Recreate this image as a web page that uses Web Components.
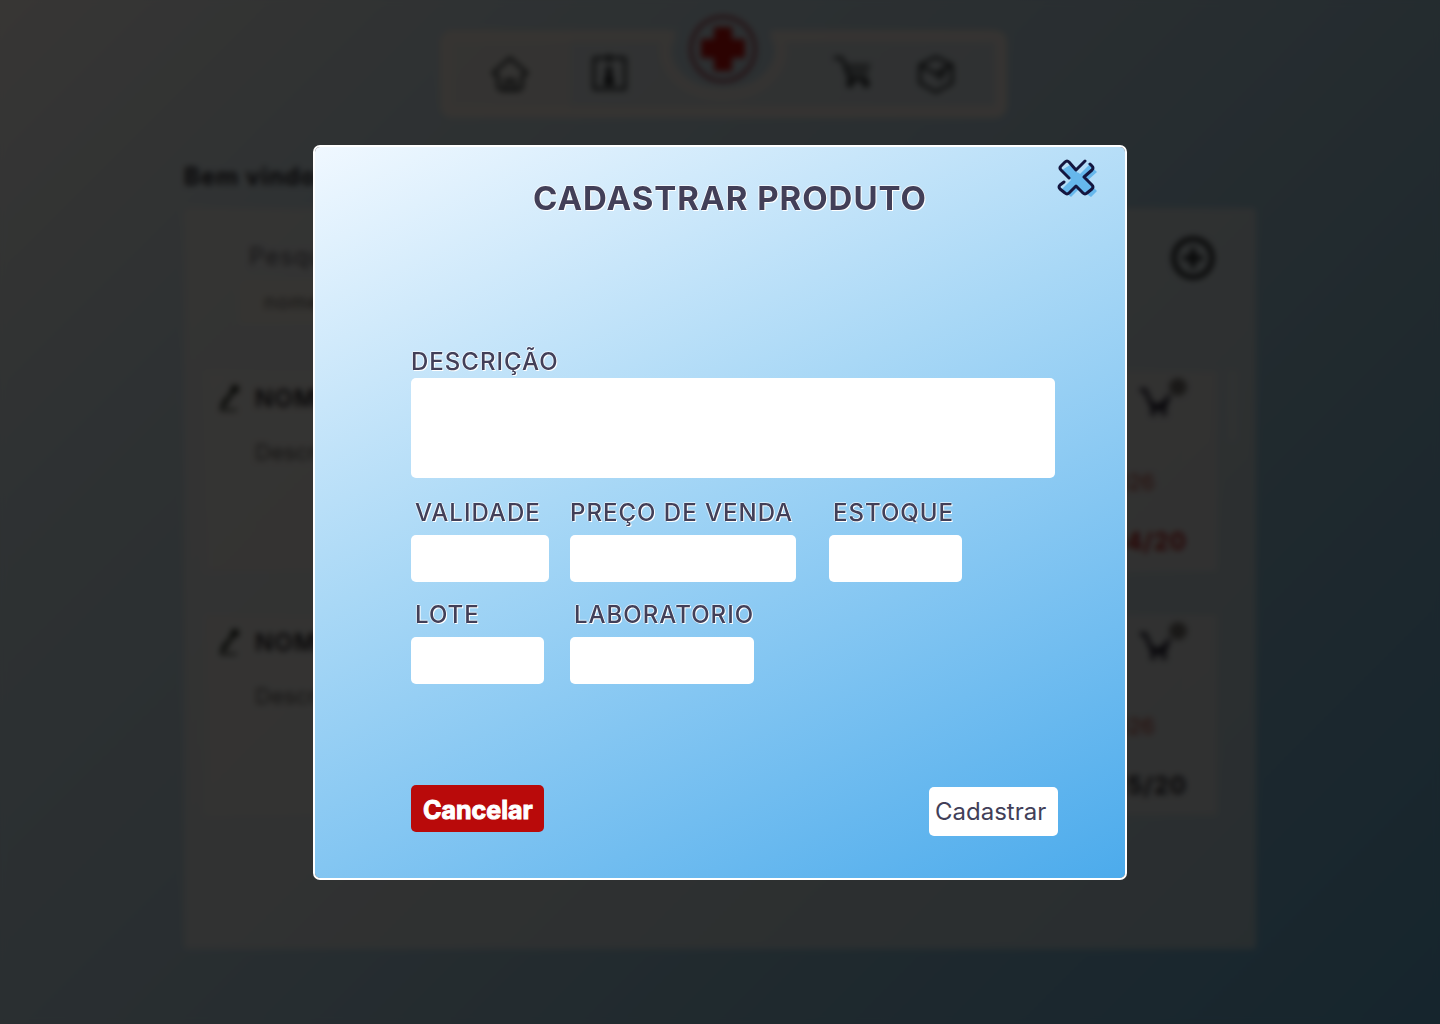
<!DOCTYPE html>
<html lang="pt-BR">
<head>
<meta charset="utf-8">
<title>Cadastrar produto</title>
<style>
  html, body { margin: 0; min-height: 100%; }
  body { font-family: Inter, "Liberation Sans", sans-serif; color: #423f58; }
</style>
</head>
<body>
<pharmacy-app></pharmacy-app>

<template id="t-app">
  <style>
    :host { display: block; position: relative; min-height: 100vh; overflow: hidden;
      background: linear-gradient(135deg, #fffdfa 0%, #d0e6f2 22%, #b9d7e8 45%, #8cc0dc 70%, #5aaad7 100%); }
    .page { max-width: 1072px; margin: 0 auto; padding: 30px 24px 75px; }
    .welcome { margin: 43px 0 15px; font-size: 24px; line-height: 32px; font-weight: 700; letter-spacing: 1px; color: #14141e; }
    .veil { position: absolute; inset: 0; z-index: 1; display: flex; align-items: center; justify-content: center;
      background: rgba(5, 4, 3, .8); backdrop-filter: blur(3px); }
  </style>
  <div class="page">
    <main-nav></main-nav>
    <h2 class="welcome">Bem vindo</h2>
    <product-panel>
      <product-card alert name="NOME" expiry="2026" stock="4/20"></product-card>
      <product-card name="NOME" expiry="2026" stock="5/20"></product-card>
    </product-panel>
  </div>
  <div class="veil"><product-dialog></product-dialog></div>
</template>

<template id="t-nav">
  <style>
    :host { display: flex; justify-content: center; padding-left: 7px; }
    nav { position: relative; width: 567px; height: 88px; }
    .shape { position: absolute; left: 0; top: -20px; width: 567px; height: 108px; }
    ul { position: relative; display: grid; grid-template-columns: 99px 244px 83px 40px; margin: 0; padding: 24px 50px 0; list-style: none; }
    a { display: block; width: 40px; height: 40px; color: #141c22; }
    svg { display: block; fill: none; stroke: currentColor; stroke-width: 3; stroke-linejoin: round; stroke-linecap: round; }
  </style>
  <nav aria-label="Principal">
    <svg class="shape" viewBox="0 0 567 108" stroke="none">
      <path stroke="none" fill="#fff8f6" fill-opacity=".42" d="M12 20H238C226 30 224 42 229 55 236 76 262 86 283 86 304 86 330 76 337 55 342 42 340 30 328 20H555Q567 20 567 32V96Q567 108 555 108H12Q0 108 0 96V32Q0 20 12 20Z"/>
      <path stroke="#fff6ec" stroke-opacity=".75" stroke-width="12" d="M14 26H230C224 36 224 48 232 60 244 78 264 84 283 84 302 84 322 78 334 60 342 48 342 36 336 26H552Q561 26 561 35V93Q561 102 552 102H14Q6 102 6 93V35Q6 26 14 26Z"/>
      <path stroke="none" fill="#fff6ec" fill-opacity=".45" d="M6 26H130V102H6Z"/>
      <circle cx="283" cy="39" r="32" stroke="#a02838" stroke-width="3"/>
      <path stroke="none" fill="#c80000" d="M274 17H292V29H305V48H292V61H274V48H261V29H274Z"/>
    </svg>
    <ul>
      <li><a href="#inicio" aria-label="Início"><svg width="40" height="40" viewBox="0 0 40 40"><path d="M3 19 20 4 37 19 32 22V31Q32 36 27 36H13Q8 36 8 31V22ZM16 36V26H24V36"/></svg></a></li>
      <li><a href="#perfil" aria-label="Perfil"><svg width="40" height="40" viewBox="0 0 40 40"><path d="M5 4H36V35H5ZM20 0V8"/><circle cx="20" cy="16" r="2" fill="currentColor"/><path fill="currentColor" d="M18 21H22L24 30H16Z"/></svg></a></li>
      <li><a href="#carrinho" aria-label="Carrinho"><svg width="40" height="40" viewBox="0 0 40 40"><path d="M2 4H9L17 26H34" /><path fill="currentColor" fill-opacity=".45" stroke="none" d="M12 9H38L33 26H15Z"/><circle cx="17" cy="30" r="2"/><circle cx="33" cy="30" r="2"/></svg></a></li>
      <li><a href="#produtos" aria-label="Produtos"><svg width="40" height="40" viewBox="0 0 40 40"><path stroke-width="3" d="M20 3 36 11V29L20 38 4 29V11ZM4 11 20 20 36 11"/><path fill="currentColor" fill-opacity=".6" stroke="none" d="M20 20 30 10V22L22 28Z"/></svg></a></li>
    </ul>
  </nav>
</template>

<template id="t-panel">
  <style>
    :host { display: block; box-sizing: border-box; min-height: 741px; padding: 32px 19px 0 21px;
      background: linear-gradient(135deg, rgba(255,250,248,.6), rgba(255,246,236,.5)); border-radius: 4px; }
    .search { display: flex; justify-content: space-between; height: 131px; padding: 0 20px 0 35px; }
    label { display: block; padding-left: 9px; margin-bottom: 6px; font-size: 24px; line-height: 34px; letter-spacing: 1px; color: #5a5864; }
    input { box-sizing: border-box; width: 420px; height: 43px; padding: 0 24px; border: 0; background: rgba(255,248,232,.5); font: 20px/24px Inter, sans-serif; letter-spacing: 1px; color: #555260; }
    input::placeholder { color: #555; opacity: 1; }
    button { width: 48px; height: 48px; margin: -6px 0 0; padding: 0; border: 0; background: none; color: #0c1218; }
    .list { display: flex; gap: 11px; }
    .cards { flex: 1; display: flex; flex-direction: column; gap: 44px; }
    .bar { width: 9px; height: 70px; background: rgba(255,255,255,.25); }
  </style>
  <div class="search">
    <div><label for="q">Pesquisar</label><input id="q" type="text" placeholder="nome"></div>
    <button type="button" aria-label="Adicionar produto"><svg width="48" height="48" viewBox="0 0 48 48" fill="none" stroke="currentColor" stroke-width="5"><circle cx="24" cy="24" r="19"/><path stroke-width="5" d="M24 14V34M14 24H34"/></svg></button>
  </div>
  <div class="list"><div class="cards"><slot></slot></div><div class="bar"></div></div>
</template>

<template id="t-card">
  <style>
    :host { display: flex; justify-content: space-between; box-sizing: border-box; height: 200px; padding: 12px 30px 0 12px;
      background: linear-gradient(100deg, rgba(255,248,240,.35), rgba(255,242,238,.45)); color: #14141e; }
    .left { display: flex; gap: 14px; }
    svg { display: block; }
    h3 { margin: 0 0 22px; font-size: 24px; line-height: 32px; font-weight: 600; letter-spacing: 1px; }
    p { margin: 0; font-size: 22px; line-height: 30px; color: #555; }
    .right { display: flex; flex-direction: column; align-items: flex-end; }
    .cart { margin-top: -6px; color: #14142c; }
    .expiry { margin: 48px 32px 0 0; color: #b43c30; }
    .stock { margin-top: 30px; font-size: 24px; line-height: 30px; font-weight: 700; letter-spacing: 1px; }
    :host([alert]) .stock { color: #b40a0a; }
  </style>
  <div class="left">
    <svg width="24" height="32" viewBox="0 0 24 32" fill="none" stroke="#0c170f" stroke-width="4" stroke-linecap="round"><path d="M18 5 6 23"/><path stroke-width="2" d="M4 27H19M4 26 7 17"/><circle cx="18" cy="6" r="2"/></svg>
    <div><h3></h3><p>Descrição</p></div>
  </div>
  <div class="right">
    <svg class="cart" width="50" height="42" viewBox="0 0 50 42" fill="none" stroke="currentColor" stroke-width="4"><path d="M3 13H8L16 31H27L32 18M12 24 20 30 29 24"/><circle cx="16" cy="36" r="1"/><circle cx="27" cy="36" r="1"/><circle cx="41" cy="10" r="9" fill="#6c6c6c" stroke="none"/></svg>
    <p class="expiry"></p>
    <div class="stock"></div>
  </div>
</template>

<template id="t-dialog">
  <style>
    :host { display: block; box-sizing: border-box; position: relative; width: 814px; max-width: 100%; padding: 31px 67px 42px 96px;
      border: 2px solid #fff; border-radius: 7px; font-family: Inter, "Liberation Sans", sans-serif;
      background: linear-gradient(155deg, #f0f8ff 0%, #a9d8f6 42%, #4cabec 100%) padding-box; }
    h1 { margin: 0 0 127px -9px; font-size: 33px; line-height: 40px; font-weight: 700; letter-spacing: 1px; text-align: center; color: #423f58;
      text-shadow: 1px 1px 0 #fff, -1px 0 0 #ffffffb3, 0 -1px 0 #ffffffb3; }
    .close { position: absolute; top: 11px; right: 26px; width: 42px; height: 40px; padding: 0; border: 0; background: none; }
    .row { display: grid; grid-template-columns: 138px 238px 133px; column-gap: 21px; align-items: start; }
    form { display: flex; flex-direction: column; }
    .first { margin: 18px 0 16px; }
    .actions { display: flex; justify-content: space-between; align-items: flex-start; margin-top: 101px; }
    button { cursor: pointer; }
    .cancel, .save { box-sizing: border-box; border: 0; border-radius: 5px; font: 24px/30px Inter, "Liberation Sans", sans-serif; text-align: left; }
    .cancel { width: 133px; height: 47px; padding: 4px 0 0 12px; background: #b90a0a; color: #fff; font-size: 25px; font-weight: 700; -webkit-text-stroke: 1px #fff; }
    .save { width: 129px; height: 49px; margin-top: 2px; padding: 2px 0 0 6px; background: #fff; color: #423f58; }
  </style>
  <h1>CADASTRAR PRODUTO</h1>
  <form>
    <form-field label="DESCRIÇÃO" multiline></form-field>
    <div class="row first">
      <form-field label="VALIDADE" width="138" inset></form-field>
      <form-field label="PREÇO DE VENDA" width="226"></form-field>
      <form-field label="ESTOQUE" width="133" inset></form-field>
    </div>
    <div class="row">
      <form-field label="LOTE" width="133" inset></form-field>
      <form-field label="LABORATORIO" width="184" inset></form-field>
    </div>
    <div class="actions">
      <button class="cancel" type="button">Cancelar</button>
      <button class="save" type="submit">Cadastrar</button>
    </div>
  </form>
  <button class="close" type="button" aria-label="Fechar">
    <svg width="42" height="40" viewBox="0 0 42 40" fill="none">
      <path fill="#66b7ec" d="M13 7 21 15 31 5 40 14 30 23 40 33 34 39 22 31 14 39 5 31 14 22 5 12Z"/>
      <path fill="#b4ddf8" d="M20 13 29 4 32 7 23 16Z"/>
      <path stroke="#14163f" stroke-width="3" stroke-linecap="round" stroke-linejoin="round" d="M28 3 19 12 12 4Q10 2 8 4L4 8Q2 10 4 12L12 20M7 24 3 27Q1 29 3 31L8 35Q10 37 12 35L19 28 26 35Q28 37 30 35L35 31Q37 29 35 27L27 19 35 12Q37 10 35 8L33 6"/>
    </svg>
  </button>
</template>

<script>
  const define = (tag, templateId, setup) => customElements.define(tag, class extends HTMLElement {
    constructor() {
      super();
      this.attachShadow({ mode: 'open' });
    }
    connectedCallback() {
      if (this.shadowRoot.childNodes.length) return;
      this.shadowRoot.append(document.getElementById(templateId).content.cloneNode(true));
      if (setup) setup(this, this.shadowRoot);
    }
  });

  class FormField extends HTMLElement {
    connectedCallback() {
      if (this.shadowRoot) return;
      const root = this.attachShadow({ mode: 'open' });
      const control = this.hasAttribute('multiline') ? '<textarea id="c"></textarea>' : '<input id="c" type="text">';
      root.innerHTML = `
        <style>
          :host { display: flex; flex-direction: column; gap: 6px; }
          :host([multiline]) { gap: 0; }
          label { font-size: 24px; line-height: 33px; font-weight: 500; letter-spacing: 1px; white-space: nowrap; color: #423f58;
            text-shadow: 1px 1px 0 #fff, -1px 0 0 #ffffff99, 0 -1px 0 #ffffff99; }
          :host([inset]) label { padding-left: 4px; }
          input, textarea { box-sizing: border-box; display: block; margin: 0; padding: 8px 12px; border: 0; border-radius: 5px;
            background: #fff; color: #423f58; font: 20px/24px Inter, sans-serif; resize: none; }
          input { height: 47px; width: var(--field-width); }
          textarea { height: 100px; width: 100%; max-width: 644px; }
        </style>
        <label for="c"></label>${control}`;
      root.querySelector('label').textContent = this.getAttribute('label');
      if (this.hasAttribute('width')) this.style.setProperty('--field-width', this.getAttribute('width') + 'px');
    }
  }
  customElements.define('form-field', FormField);
  define('main-nav', 't-nav');
  define('product-card', 't-card', (host, root) => {
    root.querySelector('h3').textContent = host.getAttribute('name');
    root.querySelector('.expiry').textContent = host.getAttribute('expiry');
    root.querySelector('.stock').textContent = host.getAttribute('stock');
  });
  define('product-panel', 't-panel');
  define('product-dialog', 't-dialog');
  define('pharmacy-app', 't-app');
</script>
</body>
</html>
